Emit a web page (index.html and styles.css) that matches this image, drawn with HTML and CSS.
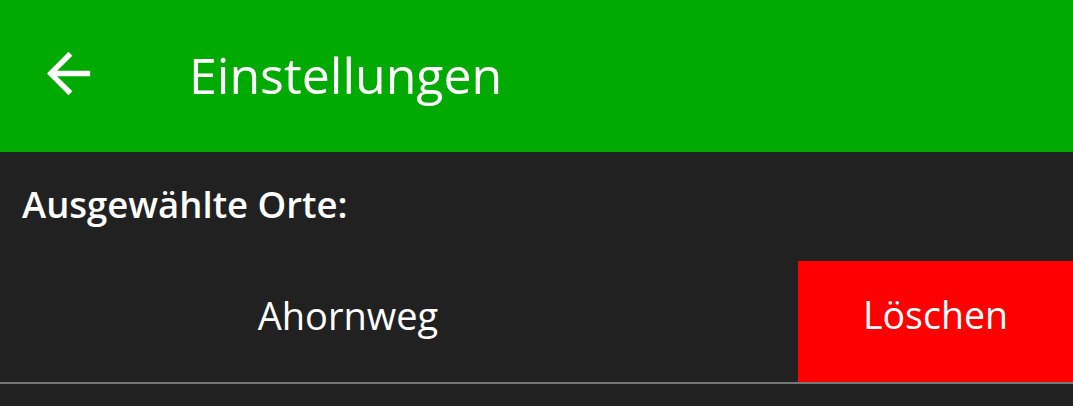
FILE: index.html
```html
<!DOCTYPE html>
<html lang="de">
<head>
<meta charset="utf-8">
<title>Einstellungen</title>
<link rel="stylesheet" href="styles.css">
</head>
<body>
<header class="toolbar">
  <button class="back" aria-label="Zurück">
    <svg viewBox="0 0 24 24" width="65" height="65"><path fill="#fff" d="M20 11H7.83l5.59-5.59L12 4l-8 8 8 8 1.41-1.41L7.83 13H20v-2z"/></svg>
  </button>
  <h1 class="title">Einstellungen</h1>
</header>
<main class="content">
  <h2 class="label">Ausgewählte Orte:</h2>
  <div class="row">
    <div class="place">Ahornweg</div>
    <button class="delete">Löschen</button>
  </div>
</main>
</body>
</html>
```
FILE: styles.css
```css
html, body {
  margin: 0;
  padding: 0;
  background: #212121;
  font-family: "Open Sans", "Noto Sans", sans-serif;
  color: #fff;
  height: 100%;
  overflow: hidden;
}
.toolbar {
  height: 152px;
  background: #00aa00;
  display: flex;
  align-items: center;
}
.back {
  border: 0;
  background: none;
  padding: 0;
  margin: 0 0 0 36px;
  width: 65px;
  height: 65px;
  display: flex;
  transform: translateY(-3px);
}
.back svg { display: block; }
.title {
  margin: 0 0 0 88px;
  font-size: 50px;
  font-weight: 400;
  line-height: 1;
  transform: translateY(-1px);
}
.content {
  display: flex;
  flex-direction: column;
}
.label {
  margin: 0;
  padding: 34px 0 0 22px;
  height: 109px;
  box-sizing: border-box;
  font-size: 36.5px;
  font-weight: 600;
  line-height: 1;
}
.row {
  display: flex;
  height: 121px;
  border-bottom: 2px solid #777777;
}
.place {
  flex: 1;
  display: flex;
  align-items: center;
  justify-content: center;
  padding: 0 102px 14px 0;
  font-size: 38px;
  font-weight: 400;
}
.delete {
  width: 275px;
  border: 0;
  margin: 0;
  background: #ff0000;
  color: #fff;
  font-family: inherit;
  font-size: 37.5px;
  font-weight: 400;
  display: flex;
  align-items: center;
  justify-content: center;
  padding: 0 0 14px 0;
}
```
